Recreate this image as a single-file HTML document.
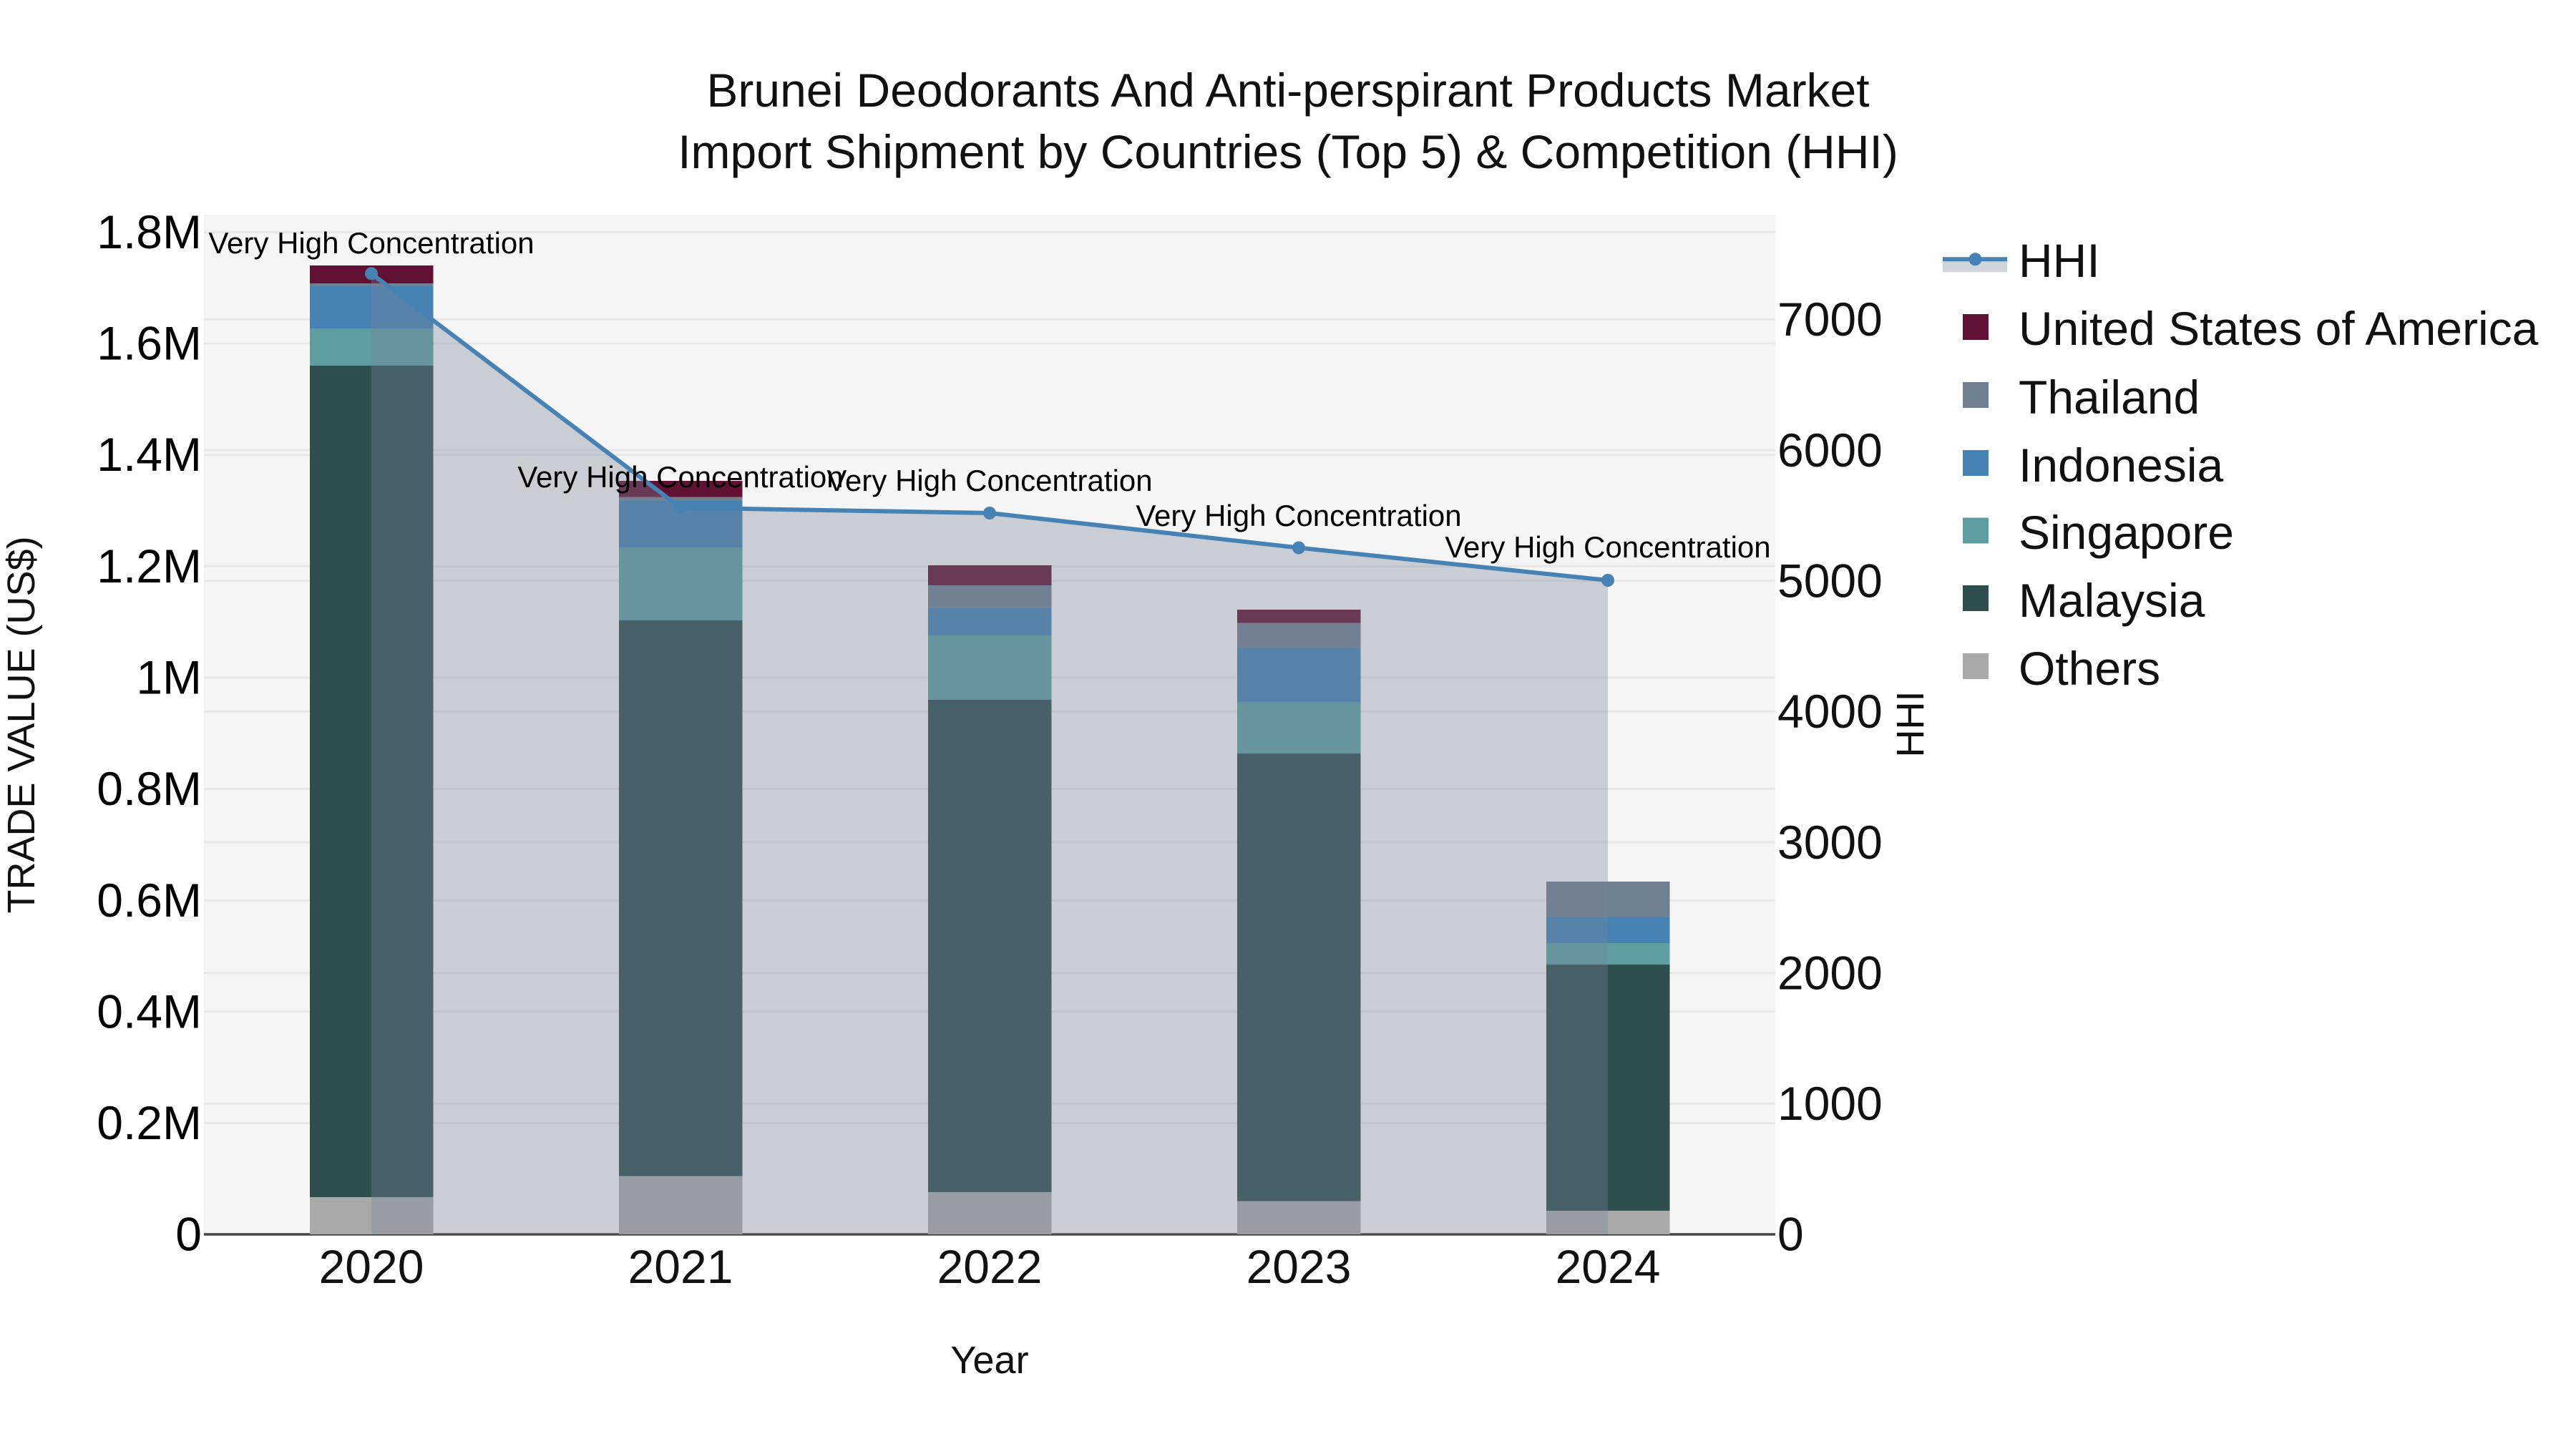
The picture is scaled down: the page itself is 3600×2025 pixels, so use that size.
<!DOCTYPE html>
<html>
<head>
<meta charset="utf-8">
<style>
html,body{margin:0;padding:0;background:#fff;width:3600px;height:2025px;overflow:hidden}
svg{display:block}
text{font-family:"Liberation Sans",Arial,sans-serif;fill:#111}
.t{font-size:66px}
.a{font-size:42px;fill:#000}
.tl{font-size:66px}
.lab{font-size:54px}
</style>
</head>
<body>
<svg width="3600" height="2025" viewBox="0 0 3600 2025" xmlns="http://www.w3.org/2000/svg">
<rect width="3600" height="2025" fill="#fff"/>
<rect x="285" y="300" width="2196" height="1425" fill="#f5f5f5"/>
<g stroke="#e8e8e8" stroke-width="3">
<path d="M285 324.5H2481M285 480H2481M285 635.7H2481M285 791.2H2481M285 947H2481M285 1102.6H2481M285 1258.2H2481M285 1413.8H2481M285 1569.4H2481"/>
<path d="M285 446.4H2481M285 629H2481M285 811.7H2481M285 994.4H2481M285 1177H2481M285 1359.7H2481M285 1542.4H2481"/>
</g>
<line x1="285" y1="1725" x2="2481" y2="1725" stroke="#444" stroke-width="3.5"/>

<!-- 2020 -->
<rect x="433" y="1673" width="172.5" height="52" fill="#a9a9a9"/>
<rect x="433" y="511" width="172.5" height="1162" fill="#2f4f4f"/>
<rect x="433" y="459" width="172.5" height="52" fill="#5f9ea0"/>
<rect x="433" y="400" width="172.5" height="59" fill="#4682b4"/>
<rect x="433" y="396" width="172.5" height="4" fill="#708090"/>
<rect x="433" y="371" width="172.5" height="25" fill="#611234"/>
<!-- 2021 -->
<rect x="865" y="1643.6" width="172.5" height="81.4" fill="#a9a9a9"/>
<rect x="865" y="867" width="172.5" height="776.6" fill="#2f4f4f"/>
<rect x="865" y="765" width="172.5" height="102" fill="#5f9ea0"/>
<rect x="865" y="700" width="172.5" height="65" fill="#4682b4"/>
<rect x="865" y="694.7" width="172.5" height="5.3" fill="#708090"/>
<rect x="865" y="672" width="172.5" height="22.7" fill="#611234"/>
<!-- 2022 -->
<rect x="1297" y="1666" width="172.5" height="59" fill="#a9a9a9"/>
<rect x="1297" y="978" width="172.5" height="688" fill="#2f4f4f"/>
<rect x="1297" y="888" width="172.5" height="90" fill="#5f9ea0"/>
<rect x="1297" y="848.7" width="172.5" height="39.3" fill="#4682b4"/>
<rect x="1297" y="818" width="172.5" height="30.7" fill="#708090"/>
<rect x="1297" y="790" width="172.5" height="28" fill="#611234"/>
<!-- 2023 -->
<rect x="1729" y="1678.6" width="172.5" height="46.4" fill="#a9a9a9"/>
<rect x="1729" y="1053" width="172.5" height="625.6" fill="#2f4f4f"/>
<rect x="1729" y="981" width="172.5" height="72" fill="#5f9ea0"/>
<rect x="1729" y="906" width="172.5" height="75" fill="#4682b4"/>
<rect x="1729" y="870.7" width="172.5" height="35.3" fill="#708090"/>
<rect x="1729" y="852" width="172.5" height="18.7" fill="#611234"/>
<!-- 2024 -->
<rect x="2161" y="1692" width="172.5" height="33" fill="#a9a9a9"/>
<rect x="2161" y="1348" width="172.5" height="344" fill="#2f4f4f"/>
<rect x="2161" y="1318" width="172.5" height="30" fill="#5f9ea0"/>
<rect x="2161" y="1281.5" width="172.5" height="36.5" fill="#4682b4"/>
<rect x="2161" y="1232" width="172.5" height="49.5" fill="#708090"/>

<!-- HHI area and line -->
<path d="M519 382.3L951 709.5L1383 717L1815 765.5L2247 811V1725H519Z" fill="rgb(119,131,153)" fill-opacity="0.35"/>
<path d="M519 382.3L951 709.5L1383 717L1815 765.5L2247 811" fill="none" stroke="#4682b4" stroke-width="6" stroke-linejoin="round"/>
<g fill="#4682b4">
<circle cx="519" cy="382.3" r="9"/><circle cx="951" cy="709.5" r="9"/><circle cx="1383" cy="717" r="9"/><circle cx="1815" cy="765.5" r="9"/><circle cx="2247" cy="811" r="9"/>
</g>

<!-- point labels -->
<g class="a" text-anchor="middle">
<text class="a" x="519" y="354">Very High Concentration</text>
<text class="a" x="951" y="681">Very High Concentration</text>
<text class="a" x="1383" y="686">Very High Concentration</text>
<text class="a" x="1815" y="735">Very High Concentration</text>
<text class="a" x="2247" y="779">Very High Concentration</text>
</g>

<!-- title -->
<text class="t" x="1800" y="149" text-anchor="middle">Brunei Deodorants And Anti-perspirant Products Market</text>
<text class="t" x="1800" y="235" text-anchor="middle">Import Shipment by Countries (Top 5) &amp; Competition (HHI)</text>

<!-- left ticks -->
<g text-anchor="end">
<text class="tl" x="282" y="347" style="fill:#000">1.8M</text>
<text class="tl" x="282" y="502.5" style="fill:#000">1.6M</text>
<text class="tl" x="282" y="658" style="fill:#000">1.4M</text>
<text class="tl" x="282" y="814" style="fill:#000">1.2M</text>
<text class="tl" x="282" y="969.5" style="fill:#000">1M</text>
<text class="tl" x="282" y="1125" style="fill:#000">0.8M</text>
<text class="tl" x="282" y="1281" style="fill:#000">0.6M</text>
<text class="tl" x="282" y="1436.5" style="fill:#000">0.4M</text>
<text class="tl" x="282" y="1592" style="fill:#000">0.2M</text>
<text class="tl" x="282" y="1747.5" style="fill:#000">0</text>
</g>
<!-- right ticks -->
<g text-anchor="start">
<text class="tl" x="2484" y="469">7000</text>
<text class="tl" x="2484" y="652">6000</text>
<text class="tl" x="2484" y="834.5">5000</text>
<text class="tl" x="2484" y="1017">4000</text>
<text class="tl" x="2484" y="1200">3000</text>
<text class="tl" x="2484" y="1382.5">2000</text>
<text class="tl" x="2484" y="1565">1000</text>
<text class="tl" x="2484" y="1747.5">0</text>
</g>
<!-- x ticks -->
<g text-anchor="middle">
<text class="tl" x="519" y="1793">2020</text>
<text class="tl" x="951" y="1793">2021</text>
<text class="tl" x="1383" y="1793">2022</text>
<text class="tl" x="1815" y="1793">2023</text>
<text class="tl" x="2247" y="1793">2024</text>
</g>
<!-- axis titles -->
<text class="lab" x="1383" y="1919" text-anchor="middle">Year</text>
<text class="lab" text-anchor="middle" transform="translate(48,1013) rotate(-90)">TRADE VALUE (US$)</text>
<text class="lab" text-anchor="middle" transform="translate(2688,1012) rotate(-90)">HHI</text>

<!-- legend -->
<rect x="2715" y="362.3" width="90" height="18" fill="rgb(119,131,153)" fill-opacity="0.35"/>
<line x1="2715" y1="362.3" x2="2805" y2="362.3" stroke="#4682b4" stroke-width="6"/>
<circle cx="2760.5" cy="362.3" r="9" fill="#4682b4"/>
<rect x="2743" y="439" width="36" height="36" fill="#611234"/>
<rect x="2743" y="534" width="36" height="36" fill="#708090"/>
<rect x="2743" y="629" width="36" height="36" fill="#4682b4"/>
<rect x="2743" y="723.5" width="36" height="36" fill="#5f9ea0"/>
<rect x="2743" y="818" width="36" height="36" fill="#2f4f4f"/>
<rect x="2743" y="913" width="36" height="36" fill="#a9a9a9"/>
<g>
<text class="tl" x="2821" y="387">HHI</text>
<text class="tl" x="2821" y="482">United States of America</text>
<text class="tl" x="2821" y="578">Thailand</text>
<text class="tl" x="2821" y="673">Indonesia</text>
<text class="tl" x="2821" y="767">Singapore</text>
<text class="tl" x="2821" y="862">Malaysia</text>
<text class="tl" x="2821" y="957">Others</text>
</g>
</svg>
</body>
</html>
